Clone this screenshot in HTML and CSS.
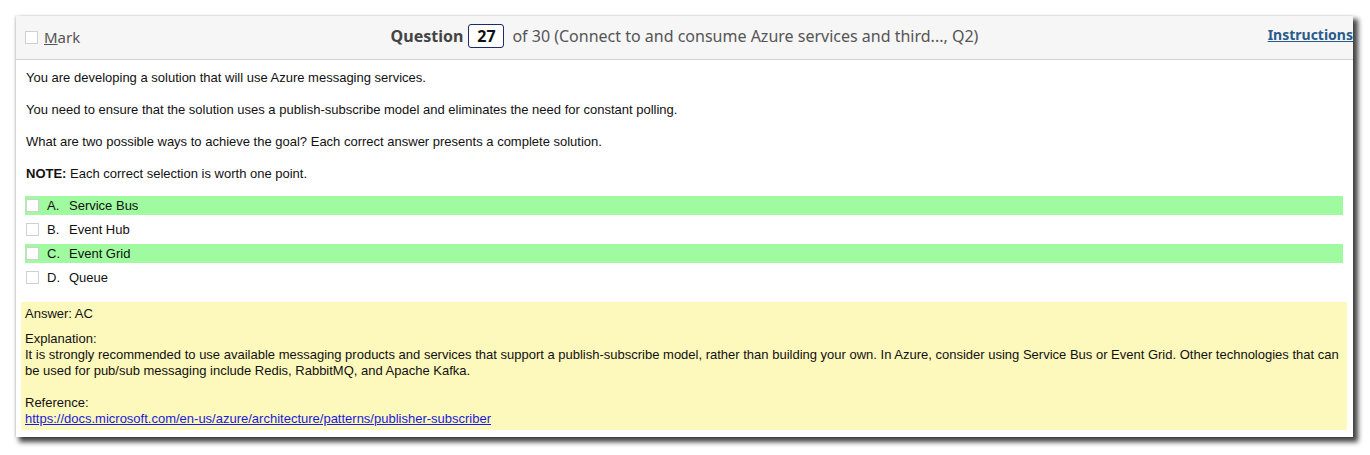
FILE: index.html
```html
<!DOCTYPE html>
<html>
<head>
<meta charset="utf-8">
<link rel="stylesheet" href="styles.css">
</head>
<body>
<div class="card">
  <div class="header">
    <label class="mark"><span class="cb cb-head"></span><span class="mark-text"><u>M</u>ark</span></label>
    <div class="qtitle"><span class="qword">Question</span><span class="qnum">27</span><span class="qof">of 30 (Connect to and consume Azure services and third..., Q2)</span></div>
    <a class="instr" href="#">Instructions</a>
  </div>
  <div class="body">
    <p>You are developing a solution that will use Azure messaging services.</p>
    <p>You need to ensure that the solution uses a publish-subscribe model and eliminates the need for constant polling.</p>
    <p>What are two possible ways to achieve the goal? Each correct answer presents a complete solution.</p>
    <p><b>NOTE:</b> Each correct selection is worth one point.</p>
    <div class="options">
      <div class="opt correct"><span class="cb"></span><span class="letter">A.</span><span>Service Bus</span></div>
      <div class="opt"><span class="cb"></span><span class="letter">B.</span><span>Event Hub</span></div>
      <div class="opt correct"><span class="cb"></span><span class="letter">C.</span><span>Event Grid</span></div>
      <div class="opt"><span class="cb"></span><span class="letter">D.</span><span>Queue</span></div>
    </div>
  </div>
  <div class="answer">
    <div class="ans-line">Answer: AC</div>
    <div class="expl">Explanation:<br>It is strongly recommended to use available messaging products and services that support a publish-subscribe model, rather than building your own. In Azure, consider using Service Bus or Event Grid. Other technologies that can be used for pub/sub messaging include Redis, RabbitMQ, and Apache Kafka.<br><br>Reference:<br><a href="#">https://docs.microsoft.com/en-us/azure/architecture/patterns/publisher-subscriber</a></div>
  </div>
</div>
</body>
</html>
```
FILE: styles.css
```css
html, body { margin: 0; padding: 0; background: #fff; }
body { padding: 16px; font-family: "Liberation Sans", Arial, sans-serif; }
.card {
  width: 1337px;
  background: #fff;
  box-shadow: 4px 4px 5px 1px rgba(0,0,0,0.75), -1px 0 2px rgba(0,0,0,0.15);
  padding-bottom: 7px;
}
.header {
  height: 43px;
  background: #f6f6f6;
  border-bottom: 1px solid #d4d4d4;
  display: grid;
  grid-template-columns: 1fr auto 1fr;
  align-items: center;
  font-family: "Noto Sans", "Open Sans", sans-serif;
  color: #444;
}
.mark { display: flex; align-items: center; padding-left: 9px; font-size: 15px; margin-bottom: 1px; }
.cb {
  display: inline-block; width: 11px; height: 11px;
  border: 1px solid #d0d0d0; background: #fff; flex: none;
}
.cb-head { margin-right: 6px; }
.mark-text { color: #555; }
.qtitle { display: flex; align-items: center; font-size: 16px; margin-bottom: 3px; }
.qword { font-weight: bold; color: #444; }
.qnum {
  display: inline-block; margin: 0 8px 0 5px; padding: 0 7px; height: 22px; line-height: 22px;
  border: 1px solid #1d2a6b; border-radius: 3px; background: #fff;
  font-weight: bold; color: #111; min-width: 20px; text-align: center;
}
.qof { color: #555; }
.instr {
  justify-self: end; font-weight: bold; font-size: 14px; color: #2a5b8c;
  text-decoration: underline; margin-bottom: 6px;
}
.body { padding: 10px 10px 0 9px; font-size: 13px; color: #111; }
.body p { margin: 0 0 16px 1px; line-height: 16px; }
.options { margin-top: -2px; display: flex; flex-direction: column; gap: 5px; }
.opt { display: flex; align-items: center; height: 19px; font-size: 13px; }
.opt.correct { background: #a0fba0; }
.opt .cb { margin: 0 8px 0 1px; }
.letter { width: 22px; }
.answer {
  margin: 15px 6px 0 5px; background: #fdf8bc; padding: 4px 4px 3px;
  font-size: 13px; color: #111; line-height: 16px;
}
.ans-line { margin-bottom: 9px; }
.expl a { color: #1a1add; text-decoration: underline; }
```
